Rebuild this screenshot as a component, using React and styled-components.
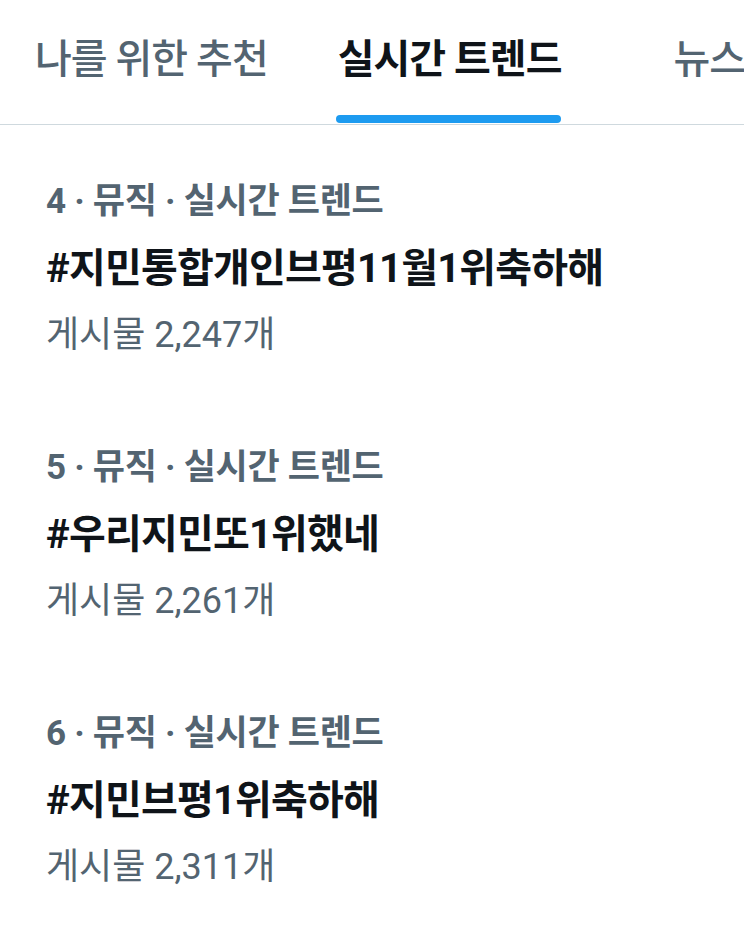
import React from "react";
import styled, { createGlobalStyle } from "styled-components";

const Global = createGlobalStyle`
  html, body { margin: 0; padding: 0; background: #ffffff; }
  body { font-family: Roboto, "Noto Sans CJK KR", sans-serif; -webkit-font-smoothing: antialiased; }
`;

const Page = styled.div`
  width: 744px;
  height: 932px;
  overflow: hidden;
  background: #ffffff;
`;

const TabBar = styled.nav`
  display: flex;
  height: 124px;
  border-bottom: 1px solid #cfd9de;
  padding-left: 35px;
  white-space: nowrap;
  overflow: hidden;
`;

const Tab = styled.div`
  display: flex;
  flex-direction: column;
  align-items: stretch;
  flex-shrink: 0;
  margin-left: ${(p) => p.$offset || 0}px;
`;

const TabLabel = styled.span`
  margin-top: 36px;
  font-size: 40px;
  line-height: 48px;
  letter-spacing: -1px;
  font-weight: ${(p) => (p.$active ? 700 : 500)};
  color: ${(p) => (p.$active ? "#0f1419" : "#536471")};
`;

const Indicator = styled.div`
  margin-top: auto;
  margin-bottom: 1px;
  margin-left: -2px;
  height: 8px;
  border-radius: 4px;
  background: ${(p) => (p.$active ? "#1d9bf0" : "transparent")};
`;

const List = styled.div`
  padding-top: 10px;
`;

const Item = styled.div`
  padding: 34px 46px;
  display: flex;
  flex-direction: column;
  white-space: nowrap;
`;

const Category = styled.div`
  font-size: 35px;
  line-height: 66px;
  font-weight: 700;
  color: #536471;
  letter-spacing: -0.3px;
`;

const Headline = styled.div`
  font-size: 40px;
  line-height: 68px;
  font-weight: 700;
  color: #0f1419;
  letter-spacing: -0.8px;
`;

const Count = styled.div`
  font-size: 36px;
  line-height: 64px;
  font-weight: 400;
  color: #536471;
  letter-spacing: 0;
`;

const tabs = [
  { label: "나를 위한 추천", offset: 0 },
  { label: "실시간 트렌드", offset: 70, active: true },
  { label: "뉴스", offset: 112 },
];

const trends = [
  { rank: 4, title: "#지민통합개인브평11월1위축하해", count: "2,247" },
  { rank: 5, title: "#우리지민또1위했네", count: "2,261" },
  { rank: 6, title: "#지민브평1위축하해", count: "2,311" },
];

export default function App() {
  return (
    <Page>
      <Global />
      <TabBar>
        {tabs.map((t) => (
          <Tab key={t.label} $offset={t.offset}>
            <TabLabel $active={t.active}>{t.label}</TabLabel>
            <Indicator $active={t.active} />
          </Tab>
        ))}
      </TabBar>
      <List>
        {trends.map((t) => (
          <Item key={t.rank}>
            <Category>{t.rank} · 뮤직 · 실시간 트렌드</Category>
            <Headline>{t.title}</Headline>
            <Count>게시물 {t.count}개</Count>
          </Item>
        ))}
      </List>
    </Page>
  );
}
